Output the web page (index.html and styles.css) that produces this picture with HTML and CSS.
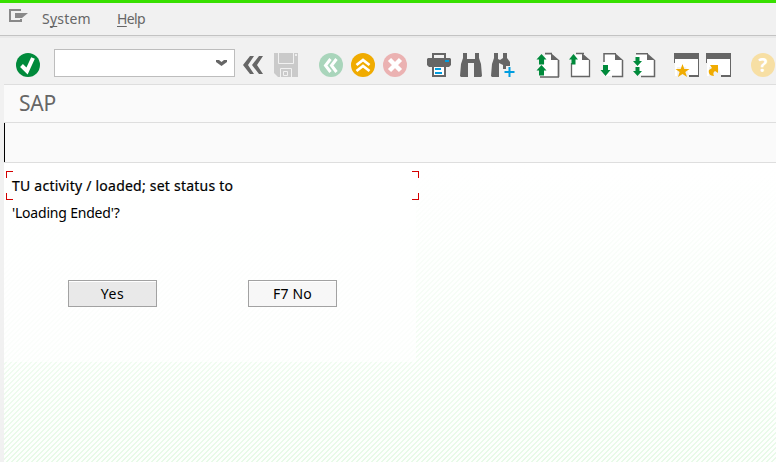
FILE: index.html
```html
<!DOCTYPE html>
<html lang="en">
<head>
<meta charset="utf-8">
<title>SAP</title>
<link rel="stylesheet" href="styles.css">
</head>
<body>
<div class="window">
  <nav class="menubar">
    <svg class="menu-icon" width="20" height="14" viewBox="0 0 20 14"><path d="M12 1H1v11h11v-2" fill="none" stroke="#898989" stroke-width="2"/><path d="M6 4h13l-6 5H6z" fill="#898989"/></svg>
    <span class="menu system">S<u>y</u>stem</span>
    <span class="menu help"><u>H</u>elp</span>
  </nav>
  <div class="toolbar">
    <svg width="24" height="24" viewBox="0 0 24 24"><circle cx="12" cy="12" r="12" fill="#008a3b"/><path d="M5.500 12.500l5.500 5.500 6-13" fill="none" stroke="#fff" stroke-width="4"/></svg>
    <div class="command"><svg width="11" height="8" viewBox="0 0 11 8"><path d="M0 1h3l2.500 2L8 1h3v2L5.500 7 0 3z" fill="#666"/></svg></div>
    <svg class="collapse" width="20" height="18" viewBox="0 0 20 18"><path d="M7 0h4L5 9l6 9H7L0 9zM16 0h4l-6 9 6 9h-4L9 9z" fill="#666"/></svg>
    <svg class="save" width="24" height="24" viewBox="0 0 24 24"><path d="M0 0h24v24H4l-4-4z" fill="#cacaca"/><path d="M4.500 0v10.500h15V0M6.500 24v-8.500h11V24" fill="none" stroke="#f1f1f1"/><path d="M9.500 18.500h4v4h-4z" fill="none" stroke="#f1f1f1"/><path d="M21 1h2v2h-2z" fill="#eee"/></svg>
    <div class="group nav">
      <svg width="24" height="24" viewBox="0 0 24 24"><circle cx="12" cy="12" r="12" fill="#a9d5bb"/><path d="M11.500 6L6.500 12.500l5 6.500M17.500 6l-5 6.500 5 6.500" fill="none" stroke="#fff" stroke-width="3"/></svg>
      <svg width="24" height="24" viewBox="0 0 24 24"><circle cx="12" cy="12" r="12" fill="#f0ab00"/><path d="M5.500 12l6.500-5 6.500 5M5.500 18l6.500-5 6.500 5" fill="none" stroke="#fff" stroke-width="2.800"/></svg>
      <svg width="24" height="24" viewBox="0 0 24 24"><circle cx="12" cy="12" r="12" fill="#ebb2b2"/><path d="M6.500 6.500l11 11M17.500 6.500l-11 11" stroke="#fff" stroke-width="4.500"/></svg>
    </div>
    <div class="group find">
      <svg width="24" height="24" viewBox="0 0 24 24"><path d="M6 5V1h12v4" fill="none" stroke="#666" stroke-width="2"/><path d="M1 5h22l1 1v6l-2 2H2l-2-2V6z" fill="#666"/><path d="M5 13h14v11H5z" fill="#666"/><path d="M7 14h10v8H7z" fill="#fff"/><path d="M18 7h4v2h-4zM8 15h6v2H8zM8 19h7v2H8z" fill="#009de0"/></svg>
      <svg class="bino" width="22" height="24" viewBox="0 0 22 24"><path d="M3 0h4v6h8V0h4v5l2 6 1 12-1 1h-7V10H8v14H1l-1-1 1-12 2-6z" fill="#666"/></svg>
      <svg class="bino-next" width="25" height="24" viewBox="0 0 25 24"><path d="M3 0h4v6l2 1 3-2V0h4v5l3 4v4h-4v3h-3v-4l-4-2v14H1l-1-1 1-12 2-6z" fill="#666"/><path d="M18.500 14v10M13.500 19h10" stroke="#009de0" stroke-width="2"/></svg>
    </div>
    <div class="group pages">
      <svg width="24" height="25" viewBox="0 0 24 25"><path d="M8 1h8l6 6v17H4V11h4z" fill="#fff"/><path d="M8 .7h7M21.500 7v17M3 24h19" fill="none" stroke="#666" stroke-width="1.700"/><path d="M14 0l8 7h-8z" fill="#666"/><path d="M4.500 1l5 5.500H7v5H2v-5H-.5zM4.500 12l5 5.500H7v5H2v-5H-.5z" fill="#008a3b"/></svg>
      <svg width="24" height="24" viewBox="0 0 24 24"><path d="M7 1h8l6 6v16H3V10z" fill="#fff"/><path d="M7 .5h8M20.500 7v16.500H2.500V10" fill="none" stroke="#666" stroke-width="1.300"/><path d="M13 0l8 7h-8z" fill="#666"/><path d="M4.500 1L9 6.500H6.500v5h-4v-5H0z" fill="#008a3b"/></svg>
      <svg width="24" height="24" viewBox="0 0 24 24"><path d="M3 1h12l6 6v16H3z" fill="#fff"/><path d="M3 9V.8h12M21.500 7v16.500H11" fill="none" stroke="#666" stroke-width="1.500"/><path d="M14 0l8 7h-8z" fill="#666"/><path d="M2 12h5v5h2.500l-5 6-5-6H2z" fill="#008a3b"/></svg>
      <svg width="24" height="24" viewBox="0 0 24 24"><path d="M3 1h12l6 6v16H8L3 12z" fill="#fff"/><path d="M3 .8h12M21.500 7v16.500H8" fill="none" stroke="#666" stroke-width="1.500"/><path d="M14 0l8 7h-8z" fill="#666"/><path d="M2.500 4h4v4H9l-4.500 5L0 8h2.500zM2.500 14h4v4H9l-4.500 5L0 18h2.500z" fill="#008a3b"/></svg>
    </div>
    <div class="group sessions">
      <svg width="25" height="24" viewBox="0 0 25 24"><path d="M1 5h23v18H1z" fill="#fff"/><path d="M0 0h25v24H15v-2h9V6H1v4H0z" fill="#666"/><path d="M0 10h3v14h12v-4l-4-10z" fill="#f1f1f1"/><path d="M2 6h22v16h-9l-3-8H2z" fill="#fff"/><path d="M8.500 11l1.800 5h5.200l-4.200 3 1.800 5-4.600-3L4 24l1.600-5L1.500 16h5.200z" fill="#f0ab00"/></svg>
      <svg width="25" height="24" viewBox="0 0 25 24"><path d="M1 5h23v18H1z" fill="#fff"/><path d="M0 0h25v24H15v-2h9V6H1v4H0z" fill="#666"/><path d="M0 10h3v14h12V14z" fill="#f1f1f1"/><path d="M2 6h22v16h-9l-3-8H2z" fill="#fff"/><path d="M4 12h8v8l-3-2c-2 1-2 3-1 5-4 0-6-3-5-6l3-2z" fill="#f0ab00"/></svg>
    </div>
    <div class="help-button">?</div>
  </div>
  <div class="workspace">
    <h1 class="title">SAP</h1>
    <div class="appbar"></div>
    <main class="canvas">
      <section class="screen">
        <div class="message selected"><span>TU activity / loaded; set status to</span><i class="corners left"></i><i class="corners right"></i></div>
        <div class="message second">'Loading Ended'?</div>
        <div class="actions"><button class="yes">Yes</button><button>F7 No</button></div>
      </section>
    </main>
  </div>
</div>
</body>
</html>
```
FILE: styles.css
```css
* { box-sizing: border-box; }
body { margin: 0; background: #f1f1f1; font-family: "Noto Sans", "Open Sans", sans-serif; overflow: hidden; }
svg { display: block; flex: none; overflow: visible; }
.window { width: 776px; height: 462px; overflow: hidden; border-top: 3px solid #38e000; display: flex; flex-direction: column; }
.menubar { height: 33px; flex: none; display: flex; align-items: center; border-bottom: 1px solid #c3c3c3; color: #666; font-size: 14px; padding-left: 9px; }
.menu-icon { margin-bottom: 6px; }
.menu { margin-top: -1px; }
.menu u { text-underline-offset: 2px; text-decoration-thickness: 1px; text-decoration-skip-ink: none; }
.system { margin-left: 13px; width: 75px; letter-spacing: .2px; }
.help { letter-spacing: -.6px; }
.toolbar { height: 48px; flex: none; display: flex; align-items: center; padding: 10px 0 0 16px; box-shadow: inset 0 2px #e9e9e9; }
.command { width: 181px; height: 28px; margin: 0 8px 4px 14px; border: 1px solid #bdbdbd; background: #fff; display: flex; justify-content: flex-end; align-items: center; padding-right: 7px; }
.collapse { margin-right: 11px; }
.group { display: flex; align-items: center; }
.nav { gap: 8px; margin-left: 21px; }
.find { margin-left: 20px; }
.bino { margin-left: 9px; }
.bino-next { margin-left: 9px; }
.pages { gap: 8px; margin-left: 21px; }
.sessions { gap: 7px; margin-left: 17px; }
.help-button { width: 24px; height: 24px; flex: none; margin-left: 20px; border-radius: 50%; background: #f7dfa4; color: #fff; font: bold 19px/24px "Open Sans", sans-serif; text-align: center; }
.workspace { margin-left: 4px; flex: 1; display: flex; flex-direction: column; }
.title { margin: 0; height: 38px; flex: none; border-top: 1px solid #dedede; background: #fafafa; color: #666; font-size: 21px; font-weight: 400; line-height: 37px; padding-left: 15px; letter-spacing: -.2px; }
.appbar { height: 41px; flex: none; background: #fafafa; border: solid #dedede; border-width: 1px 0; position: relative; }
.appbar::before { content: ""; position: absolute; left: 0; top: 0; width: 1px; height: 39px; background: #000; }
.canvas { flex: 1; background: linear-gradient(#fff, rgba(255,255,255,.55) 50%, rgba(255,255,255,0)), repeating-linear-gradient(135deg, #e8fae8 0 1.768px, #fdfffd 1.768px 3.536px); }
.screen { width: 412px; height: 199px; padding: 8px 0 0 2px; background: rgba(255,255,255,.65); color: #000; font-size: 14px; }
.message { height: 29px; line-height: 29px; padding-left: 6px; white-space: nowrap; }
.selected { width: 413px; position: relative; letter-spacing: .23px; -webkit-text-stroke: .2px #000; }
.second { height: 26px; line-height: 26px; letter-spacing: -.2px; }
.corners { position: absolute; top: 0; width: 7px; height: 29px; background: linear-gradient(#d40000, #d40000) top / 7px 1px no-repeat, linear-gradient(#d40000, #d40000) bottom / 7px 1px no-repeat; }
.corners::before, .corners::after { content: ""; position: absolute; width: 1px; height: 7px; background: #d40000; }
.corners::before { top: 0; }
.corners::after { bottom: 0; }
.left { left: 0; }
.right { right: 0; }
.left::before, .left::after { left: 0; }
.right::before, .right::after { right: 0; }
.actions { display: flex; gap: 91px; margin: 54px 0 0 62px; }
button { width: 89px; height: 27px; padding: 0; border: 1px solid #a2a2a2; border-radius: 0; background: #f7f7f7; color: #000; font: 14px/24px "Noto Sans", sans-serif; letter-spacing: .2px; box-shadow: inset 0 1px #fff; }
.yes { background: #e9e9e9; letter-spacing: .6px; }
```
